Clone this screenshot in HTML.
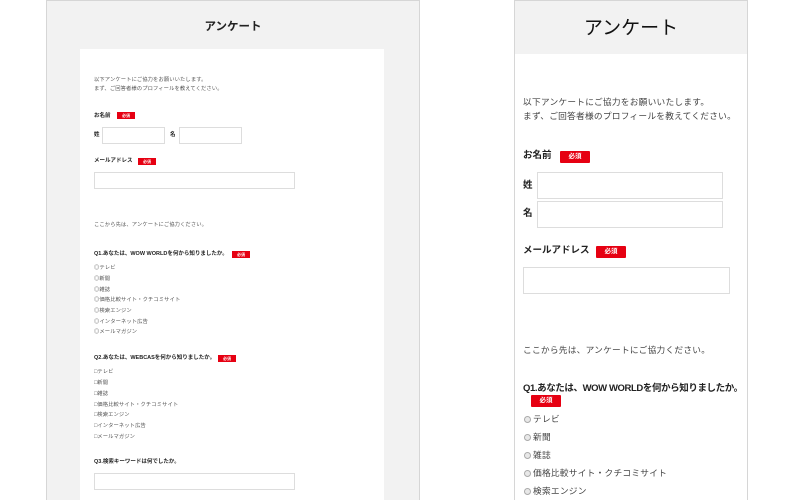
<!DOCTYPE html>
<html><head><meta charset="utf-8"><style>
*{margin:0;padding:0;box-sizing:border-box}
body{width:800px;height:500px;background:#fff;position:relative;overflow:hidden;font-family:"Liberation Sans","Noto Sans CJK JP",sans-serif;color:#333}
div,span{position:absolute;white-space:nowrap}
.l{font-size:5.3px;line-height:6px;color:#555;letter-spacing:0.1px}
.lb{font-size:5.5px;line-height:6px;font-weight:bold;color:#222}
.bl{background:#e60012;color:#fff;font-size:4px;line-height:7px;text-align:center;font-weight:bold}
.in{border:1px solid #ddd;background:#fff}
.r{font-size:8.7px;line-height:12px;color:#444;letter-spacing:0.25px}
.rb{font-size:9.5px;line-height:12px;font-weight:bold;color:#222}
.br{background:#e60012;color:#fff;font-size:6.5px;line-height:12px;text-align:center;font-weight:bold;border-radius:1px}
.rad{width:7px;height:7px;border-radius:50%;border:1px solid #aaa;background:#e8e8e8}
</style></head><body>
<div style="left:46px;top:0;width:374px;height:500px;background:#f2f2f2;border:1px solid #d6d6d6;border-bottom:none"></div>
<div style="left:180px;top:20px;width:106px;text-align:center;font-size:11.5px;line-height:14px;font-weight:bold;color:#222">アンケート</div>
<div style="left:80px;top:49px;width:304px;height:451px;background:#fff"></div>
<div class="l" style="left:94px;top:77px">以下アンケートにご協力をお願いいたします。</div>
<div class="l" style="left:94px;top:86px">まず、ご回答者様のプロフィールを教えてください。</div>
<div class="lb" style="left:94px;top:113px">お名前</div>
<div class="bl" style="left:117px;top:112px;width:18px">必須</div>
<div class="lb" style="left:94px;top:132px">姓</div>
<div class="in" style="left:102px;top:127px;width:63px;height:17px"></div>
<div class="lb" style="left:170px;top:132px">名</div>
<div class="in" style="left:179px;top:127px;width:63px;height:17px"></div>
<div class="lb" style="left:94px;top:158px">メールアドレス</div>
<div class="bl" style="left:138px;top:158px;width:18px">必須</div>
<div class="in" style="left:94px;top:172px;width:201px;height:17px"></div>
<div class="l" style="left:94px;top:222px">ここから先は、アンケートにご協力ください。</div>
<div class="lb" style="left:94px;top:251px">Q1.あなたは、WOW WORLDを何から知りましたか。</div>
<div class="bl" style="left:232px;top:251px;width:18px">必須</div>
<div class="l" style="left:94px;top:265px">◎テレビ</div>
<div class="l" style="left:94px;top:276px">◎新聞</div>
<div class="l" style="left:94px;top:287px">◎雑誌</div>
<div class="l" style="left:94px;top:297px">◎価格比較サイト・クチコミサイト</div>
<div class="l" style="left:94px;top:308px">◎検索エンジン</div>
<div class="l" style="left:94px;top:319px">◎インターネット広告</div>
<div class="l" style="left:94px;top:329px">◎メールマガジン</div>
<div class="lb" style="left:94px;top:355px">Q2.あなたは、WEBCASを何から知りましたか。</div>
<div class="bl" style="left:218px;top:355px;width:18px">必須</div>
<div class="l" style="left:94px;top:369px">□テレビ</div>
<div class="l" style="left:94px;top:380px">□新聞</div>
<div class="l" style="left:94px;top:391px">□雑誌</div>
<div class="l" style="left:94px;top:402px">□価格比較サイト・クチコミサイト</div>
<div class="l" style="left:94px;top:412px">□検索エンジン</div>
<div class="l" style="left:94px;top:423px">□インターネット広告</div>
<div class="l" style="left:94px;top:434px">□メールマガジン</div>
<div class="lb" style="left:94px;top:459px">Q3.検索キーワードは何でしたか。</div>
<div class="in" style="left:94px;top:473px;width:201px;height:17px"></div>

<div style="left:514px;top:0;width:234px;height:500px;background:#fff;border:1px solid #d6d6d6;border-bottom:none"></div>
<div style="left:515px;top:1px;width:232px;height:53px;background:#f2f2f2"></div>
<div style="left:515px;top:17px;width:232px;text-align:center;font-size:19px;line-height:24px;color:#111;font-weight:normal">アンケート</div>
<div class="r" style="left:523px;top:96px">以下アンケートにご協力をお願いいたします。</div>
<div class="r" style="left:523px;top:110px">まず、ご回答者様のプロフィールを教えてください。</div>
<div class="rb" style="left:523px;top:150px">お名前</div>
<div class="br" style="left:560px;top:151px;width:30px">必須</div>
<div class="rb" style="left:523px;top:180px">姓</div>
<div class="in" style="left:537px;top:172px;width:186px;height:27px"></div>
<div class="rb" style="left:523px;top:208px">名</div>
<div class="in" style="left:537px;top:201px;width:186px;height:27px"></div>
<div class="rb" style="left:523px;top:245px">メールアドレス</div>
<div class="br" style="left:596px;top:246px;width:30px">必須</div>
<div class="in" style="left:523px;top:267px;width:207px;height:27px"></div>
<div class="r" style="left:523px;top:344px">ここから先は、アンケートにご協力ください。</div>
<div class="rb" style="left:523px;top:383px;letter-spacing:-0.4px">Q1.あなたは、WOW WORLDを何から知りましたか。</div>
<div class="br" style="left:531px;top:395px;width:30px">必須</div>
<div class="rad" style="left:524px;top:416px"></div><div class="r" style="left:533px;top:413px">テレビ</div>
<div class="rad" style="left:524px;top:434px"></div><div class="r" style="left:533px;top:431px">新聞</div>
<div class="rad" style="left:524px;top:452px"></div><div class="r" style="left:533px;top:449px">雑誌</div>
<div class="rad" style="left:524px;top:470px"></div><div class="r" style="left:533px;top:467px">価格比較サイト・クチコミサイト</div>
<div class="rad" style="left:524px;top:488px"></div><div class="r" style="left:533px;top:485px">検索エンジン</div>
</body></html>
